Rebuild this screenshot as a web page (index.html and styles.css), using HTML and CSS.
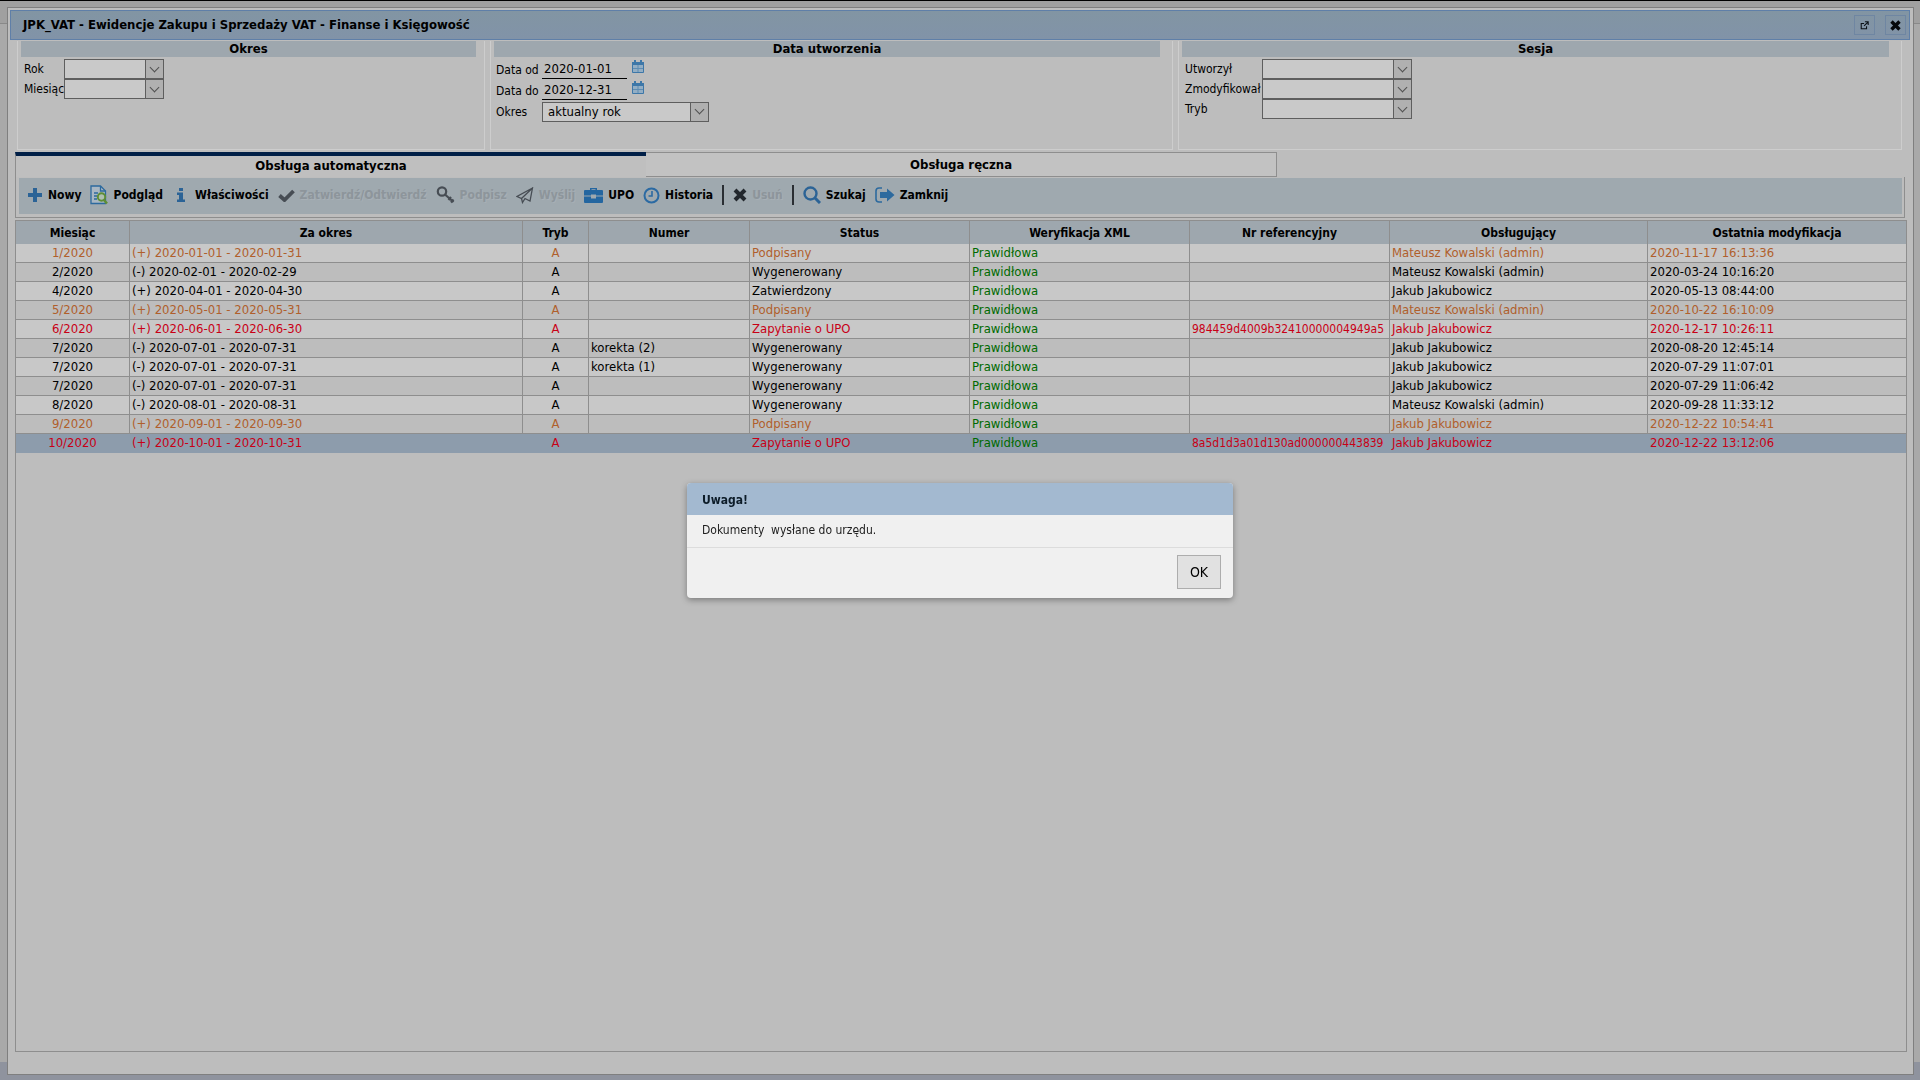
FILE: index.html
```html
<!DOCTYPE html>
<html lang="pl">
<head>
<meta charset="utf-8">
<title>JPK_VAT - Ewidencje Zakupu i Sprzedaży VAT</title>
<link rel="stylesheet" href="styles.css">
</head>
<body>
<main class="window">
  <header class="titlebar">
    <h1>JPK_VAT - Ewidencje Zakupu i Sprzedaży VAT - Finanse i Księgowość</h1>
    <button class="winbtn" aria-label="Otwórz w nowym oknie"><svg width="9" height="9" viewBox="0 0 11 11" fill="none" stroke="#0b1218" stroke-width="1.3"><path d="M5 3H1.5v6.5H8V6.500M6 1h4v4M10 1L5 6"/></svg></button>
    <button class="winbtn" aria-label="Zamknij okno"><svg width="11" height="11" viewBox="0 0 11 11" stroke="#05080b" stroke-width="3.400"><path d="M1.500 1.500l8 8M9.500 1.500l-8 8"/></svg></button>
  </header>

  <form class="filters">
    <fieldset class="group period">
      <h2>Okres</h2>
      <div class="fields">
        <label for="rok">Rok</label><span class="combo"><select id="rok"><option></option></select></span>
        <label for="mies">Miesiąc</label><span class="combo"><select id="mies"><option></option></select></span>
      </div>
    </fieldset>
    <fieldset class="group created">
      <h2>Data utworzenia</h2>
      <div class="fields">
        <label for="od">Data od</label><span class="date"><input id="od" value="2020-01-01"><svg class="cal" width="14" height="13" viewBox="0 0 14 13"><use href="#calendar"/></svg></span>
        <label for="do">Data do</label><span class="date"><input id="do" value="2020-12-31"><svg class="cal" width="14" height="13" viewBox="0 0 14 13"><use href="#calendar"/></svg></span>
        <label for="okr">Okres</label><span class="combo"><select id="okr"><option>aktualny rok</option></select></span>
      </div>
    </fieldset>
    <fieldset class="group session">
      <h2>Sesja</h2>
      <div class="fields">
        <label for="utw">Utworzył</label><span class="combo"><select id="utw"><option></option></select></span>
        <label for="zmo">Zmodyfikował</label><span class="combo"><select id="zmo"><option></option></select></span>
        <label for="tryb">Tryb</label><span class="combo"><select id="tryb"><option></option></select></span>
      </div>
    </fieldset>
  </form>

  <nav class="tabs">
    <button class="tab active">Obsługa automatyczna</button>
    <button class="tab">Obsługa ręczna</button>
  </nav>
  <div class="toolframe">
    <div class="toolbar">
      <button><svg width="16" height="16" viewBox="0 0 16 16" fill="#2b6396"><path d="M6 1h4v5h5v4h-5v5H6v-5H1V6h5z"/></svg>Nowy</button>
      <button><svg width="18" height="20" viewBox="0 0 18 20" fill="none"><path d="M10.500 1H1v17.500h14.500V6z" fill="#a9b7c3" stroke="#2d6a9e" stroke-width="1.300"/><path d="M10.500 1v5h5M4 8h4M4 11h3M4 14h3" stroke="#2d6a9e" stroke-width="1.300"/><circle cx="11.500" cy="12" r="3.700" fill="#aebfb0" stroke="#5e8e35" stroke-width="2"/><path d="M14 15l3 3.500" stroke="#5e8e35" stroke-width="2.500"/></svg>Podgląd</button>
      <button class="info"><svg width="10" height="16" viewBox="0 0 10 16" fill="#2b6396"><path d="M3 1h4v3H3zM1 5.500h6v7h2V15H1v-2.500h2V8H1z"/></svg>Właściwości</button>
      <button disabled><svg width="17" height="14" viewBox="0 0 17 12"><path d="M1.500 6.500l5 4.500L15.500 2" fill="none" stroke="#474d54" stroke-width="3.800"/></svg>Zatwierdź/Odtwierdź</button>
      <button disabled><svg width="19" height="18" viewBox="0 0 19 18" fill="none" stroke="#474d54"><circle cx="6" cy="5.500" r="4.200" stroke-width="2.200"/><path d="M9 8.500l8.500 7.500M12.500 14l2.500-3M15 16.500l2.500-3" stroke-width="2.200"/></svg>Podpisz</button>
      <button disabled><svg width="18" height="17" viewBox="0 0 18 17" fill="none" stroke="#474d54" stroke-width="1.300"><path d="M16.500 1L1 9.500l4.500 2L15.500 2M16.500 1L14 14l-5-2.500-2.500 4-1-4L16.500 1z"/></svg>Wyślij</button>
      <button><svg width="19" height="17" viewBox="0 0 19 17"><path fill="#2466a0" d="M6 3V1h7v2h5q1 0 1 1v4.500h-7v-1H7v1H0V4q0-1 1-1zM7.500 3h4v-.7h-4zM0 9.500h7v2h5v-2h7V15q0 1-1 1H1q-1 0-1-1z"/></svg>UPO</button>
      <button><svg width="17" height="17" viewBox="0 0 17 17" fill="none" stroke="#2b6aa3"><circle cx="8.500" cy="8.500" r="7" stroke-width="2"/><path d="M9 4v5H5.500" stroke-width="1.600"/></svg>Historia</button>
      <span class="sep"></span>
      <button disabled><svg width="14" height="14" viewBox="0 0 14 14" stroke="#22272d" stroke-width="4"><path d="M2 2l10 10M12 2L2 12"/></svg>Usuń</button>
      <span class="sep"></span>
      <button><svg width="18" height="18" viewBox="0 0 18 18" fill="none" stroke="#2b6396"><circle cx="7.500" cy="7.500" r="6" stroke-width="2.400"/><path d="M12 12l5 5" stroke-width="3"/></svg>Szukaj</button>
      <button><svg width="20" height="16" viewBox="0 0 20 16"><path d="M7 1H4Q1 1 1 4v8q0 3 3 3h3" fill="none" stroke="#2d6a9e" stroke-width="1.600"/><path fill="#2d6a9e" d="M5 5h7V1.500L19.500 8 12 14.500V11H5z"/></svg>Zamknij</button>
    </div>
  </div>

  <section class="grid">
    <table>
      <colgroup><col class="c1"><col><col class="c3"><col class="c4"><col class="c5"><col class="c5"><col class="c7"><col class="c8"><col class="c8"></colgroup>
      <thead><tr><th>Miesiąc</th><th>Za okres</th><th>Tryb</th><th>Numer</th><th>Status</th><th>Weryfikacja XML</th><th>Nr referencyjny</th><th>Obsługujący</th><th>Ostatnia modyfikacja</th></tr></thead>
      <tbody>
        <tr class="signed"><td>1/2020</td><td>(+) 2020-01-01 - 2020-01-31</td><td>A</td><td></td><td>Podpisany</td><td>Prawidłowa</td><td></td><td>Mateusz Kowalski (admin)</td><td>2020-11-17 16:13:36</td></tr>
        <tr><td>2/2020</td><td>(-) 2020-02-01 - 2020-02-29</td><td>A</td><td></td><td>Wygenerowany</td><td>Prawidłowa</td><td></td><td>Mateusz Kowalski (admin)</td><td>2020-03-24 10:16:20</td></tr>
        <tr><td>4/2020</td><td>(+) 2020-04-01 - 2020-04-30</td><td>A</td><td></td><td>Zatwierdzony</td><td>Prawidłowa</td><td></td><td>Jakub Jakubowicz</td><td>2020-05-13 08:44:00</td></tr>
        <tr class="signed"><td>5/2020</td><td>(+) 2020-05-01 - 2020-05-31</td><td>A</td><td></td><td>Podpisany</td><td>Prawidłowa</td><td></td><td>Mateusz Kowalski (admin)</td><td>2020-10-22 16:10:09</td></tr>
        <tr class="query"><td>6/2020</td><td>(+) 2020-06-01 - 2020-06-30</td><td>A</td><td></td><td>Zapytanie o UPO</td><td>Prawidłowa</td><td>984459d4009b32410000004949a5</td><td>Jakub Jakubowicz</td><td>2020-12-17 10:26:11</td></tr>
        <tr><td>7/2020</td><td>(-) 2020-07-01 - 2020-07-31</td><td>A</td><td>korekta (2)</td><td>Wygenerowany</td><td>Prawidłowa</td><td></td><td>Jakub Jakubowicz</td><td>2020-08-20 12:45:14</td></tr>
        <tr><td>7/2020</td><td>(-) 2020-07-01 - 2020-07-31</td><td>A</td><td>korekta (1)</td><td>Wygenerowany</td><td>Prawidłowa</td><td></td><td>Jakub Jakubowicz</td><td>2020-07-29 11:07:01</td></tr>
        <tr><td>7/2020</td><td>(-) 2020-07-01 - 2020-07-31</td><td>A</td><td></td><td>Wygenerowany</td><td>Prawidłowa</td><td></td><td>Jakub Jakubowicz</td><td>2020-07-29 11:06:42</td></tr>
        <tr><td>8/2020</td><td>(-) 2020-08-01 - 2020-08-31</td><td>A</td><td></td><td>Wygenerowany</td><td>Prawidłowa</td><td></td><td>Mateusz Kowalski (admin)</td><td>2020-09-28 11:33:12</td></tr>
        <tr class="signed"><td>9/2020</td><td>(+) 2020-09-01 - 2020-09-30</td><td>A</td><td></td><td>Podpisany</td><td>Prawidłowa</td><td></td><td>Jakub Jakubowicz</td><td>2020-12-22 10:54:41</td></tr>
        <tr class="query selected"><td>10/2020</td><td>(+) 2020-10-01 - 2020-10-31</td><td>A</td><td></td><td>Zapytanie o UPO</td><td>Prawidłowa</td><td>8a5d1d3a01d130ad000000443839</td><td>Jakub Jakubowicz</td><td>2020-12-22 13:12:06</td></tr>
      </tbody>
    </table>
  </section>
</main>

<div class="overlay">
  <div class="dialog" role="alertdialog" aria-labelledby="dlg-title">
    <h2 id="dlg-title">Uwaga!</h2>
    <p>Dokumenty&nbsp; wysłane do urzędu.</p>
    <footer><button>OK</button></footer>
  </div>
</div>

<svg width="0" height="0" class="defs"><symbol id="calendar" viewBox="0 0 14 13"><path fill="#3d77a8" d="M1 2h2V0h2v2h4V0h2v2h2v3H1z"/><path fill="#93aec4" stroke="#3d77a8" d="M1.500 4.500h11v8h-11z"/><path stroke="#5f8db3" d="M2 8.500h10M7 5v7"/></symbol></svg>
</body>
</html>
```
FILE: styles.css
```css
* { box-sizing: border-box; }

body {
  margin: 0;
  min-height: 100vh;
  display: flex;
  padding: 6px 6px 5px 7px;
  border-top: 1px solid #000;
  background: linear-gradient(#a0a0a0 0 23px, #898989 23px 24px, #a9a9a9 24px calc(100% - 18px), #8f939e calc(100% - 18px));
  font: 13px/16px "DejaVu Sans Condensed", Tahoma, "DejaVu Sans", sans-serif;
  color: #000;
}

button, input, select { font: inherit; color: inherit; }
h1, h2, p { margin: 0; font-size: inherit; }
.defs { position: absolute; }

.window {
  flex: 1;
  min-width: 0;
  display: flex;
  flex-direction: column;
  padding: 2px 3px 22px 2px;
  border: 1px solid #7f7f7f;
  background: #bdbdbd;
}

.titlebar {
  display: flex;
  align-items: center;
  gap: 10px;
  height: 30px;
  padding: 0 3px 0 12px;
  border: 1px solid #5f7fa8;
  background: linear-gradient(#8295a3, #8193a8);
}
.titlebar h1 { flex: 1; font-weight: bold; }
.winbtn {
  display: grid;
  place-items: center;
  width: 21px;
  height: 20px;
  padding: 0;
  border: 1px solid #6f86a2;
  background: none;
}

.filters { display: flex; gap: 5px; margin: 1px 8px 0 7px; }
.group {
  min-width: 0;
  height: 109px;
  margin: 0;
  padding: 0 12px 0 3px;
  border: 1px solid #cdcdcd;
  border-top: 0;
}
.period { flex: 468 1 468px; padding-right: 8px; }
.created { flex: 683 1 683px; }
.session { flex: 724 1 724px; }
.group h2 {
  height: 16px;
  text-align: center;
  background: #9ea7ae;
}
.fields {
  display: grid;
  justify-content: start;
  align-items: center;
  grid-template-columns: 40px 100px;
  grid-auto-rows: 20px;
  padding: 2px 0 0 3px;
  white-space: nowrap;
}
.fields label { font-size: 12px; }
.created .fields { grid-template-columns: 46px 167px; grid-auto-rows: 21px; padding-left: 2px; }
.session .fields { grid-template-columns: 77px 150px; }

.combo { display: grid; height: 20px; }
.combo select {
  grid-area: 1 / 1;
  appearance: none;
  width: 100%;
  padding: 0 18px 0 5px;
  border: 1px solid #5e5e5e;
  border-radius: 0;
  background: #c9c9c9;
}
.combo::before {
  content: "";
  grid-area: 1 / 1;
  z-index: 1;
  justify-self: end;
  width: 17px;
  border: 1px solid #5e5e5e;
  background: #b0b0b0;
  pointer-events: none;
}
.combo::after {
  content: "";
  grid-area: 1 / 1;
  z-index: 2;
  place-self: center end;
  width: 6px;
  height: 6px;
  margin: 0 6px 4px 0;
  border: solid #505050;
  border-width: 0 1px 1px 0;
  transform: rotate(45deg);
  pointer-events: none;
}
.date { display: flex; align-items: flex-start; gap: 4px; height: 20px; }
.date input {
  width: 85px;
  height: 19px;
  padding: 0 2px;
  border: 0;
  border-bottom: 1px solid #000;
  background: none;
}

.tabs { display: flex; margin: 2px 0 0 5px; }
.tab {
  width: 33.3%;
  height: 25px;
  padding: 0;
  border: 1px solid #8e8e8e;
  border-left: 0;
  background: #c2c2c2;
  font-weight: bold;
}
.tab.active {
  padding-bottom: 2px;
  border: 0;
  border-left: 1px solid #8e8e8e;
  border-top: 4px solid #001f47;
  background: #bfbfbf;
}

.toolframe {
  margin: 0 5px 0 5px;
  padding: 1px 2px 3px 3px;
  border: 1px solid #8e8e8e;
  border-top: 0;
}
.toolbar {
  display: flex;
  align-items: center;
  gap: 9px;
  height: 36px;
  padding: 0 8px 2px;
  background: #9fa9af;
}
.toolbar button {
  display: flex;
  align-items: center;
  gap: 5px;
  padding: 0;
  border: 0;
  background: none;
  font-weight: bold;
  font-size: 12px;
}
.toolbar .info { gap: 9px; margin-left: 4px; }
.toolbar button:disabled { color: #8d959b; text-shadow: 1px 1px 0 #a7afb5; }
.sep { width: 2px; height: 20px; background: #2a2e33; }

.grid {
  flex: 1;
  margin: 2px 3px 0 5px;
  border: 1px solid #8e8e8e;
}
table { width: 100%; table-layout: fixed; border-spacing: 0; }
.c1 { width: 114px; }
.c3 { width: 66px; }
.c4 { width: 161px; }
.c5 { width: 220px; }
.c7 { width: 200px; }
.c8 { width: 258px; }
th {
  height: 23px;
  padding: 0;
  border-right: 1px solid #8e8e8e;
  background: #9ea7ae;
  font-size: 12px;
}
td {
  height: 19px;
  padding: 0 2px;
  border: solid #8e8e8e;
  border-width: 0 1px 1px 0;
  white-space: nowrap;
  overflow: hidden;
}
th:last-child, td:last-child { border-right: 0; }
td:nth-child(1), td:nth-child(3) { text-align: center; }
td:nth-child(7) { font-size: 12px; }
tbody tr:nth-child(odd) { background: #c8c8c8; }
.signed { color: #b05f2c; }
.query { color: #c80016; }
td:nth-child(6) { color: #006a00; }
tbody tr.selected { background: #8d9cac; }
.selected td { border-color: #8d9cac; }

.overlay {
  position: fixed;
  inset: 0;
  display: flex;
  align-items: center;
  justify-content: center;
}
.dialog {
  width: 546px;
  border-radius: 4px;
  background: #f0f0f0;
  box-shadow: 0 2px 6px rgba(0, 0, 0, .35);
  color: #1c1c1c;
  font-size: 12px;
  overflow: hidden;
}
.dialog h2 { padding: 9px 15px 7px; background: #a3b9d0; color: #0d1c28; }
.dialog p { padding: 7px 15px 9px; border-bottom: 1px solid #dcdcdc; }
.dialog footer { display: flex; justify-content: flex-end; padding: 7px 12px 9px; }
.dialog footer button {
  width: 44px;
  height: 34px;
  padding: 0;
  border: 1px solid #adadad;
  background: #e1e1e1;
  font-size: 14px;
  color: #000;
}
```
